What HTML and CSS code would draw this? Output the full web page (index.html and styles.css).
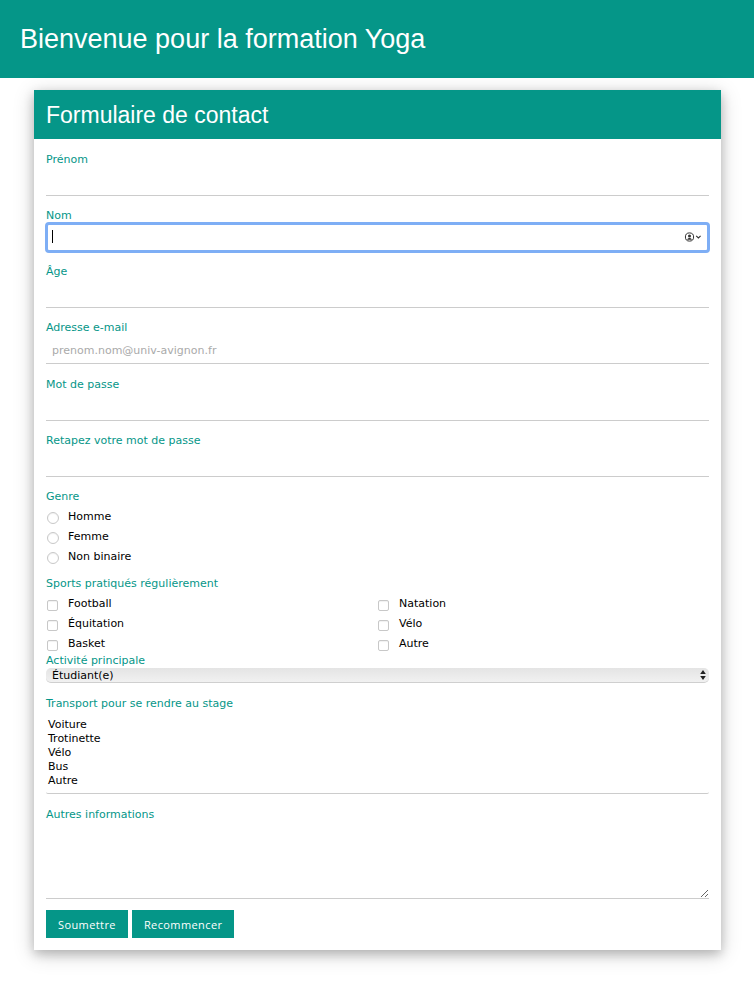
FILE: index.html
```html
<!DOCTYPE html>
<html lang="fr">
<head>
    <meta charset="UTF-8">
    <meta name="viewport" content="width=device-width, initial-scale=1.0">
    <title>Formation Yoga</title>
    <link rel="stylesheet" href="styles.css">
</head>
<body>
    <header class="page-header">
        <h1>Bienvenue pour la formation Yoga</h1>
    </header>

    <div class="form-card">
        <div class="form-title">
            <h2>Formulaire de contact</h2>
        </div>
        <form class="contact-form" id="contactForm">
            <label class="field-label" for="prenom">Prénom</label>
            <input class="text-input" type="text" id="prenom" name="prenom">

            <label class="field-label" for="nom">Nom</label>
            <div class="autofill-wrap">
                <input class="text-input text-input-focus" type="text" id="nom" name="nom" autocomplete="off">
                <span class="fake-caret"></span>
                <svg class="autofill-icon" width="18" height="11" viewBox="0 0 18 11">
                    <circle cx="5.5" cy="5" r="4.1" fill="none" stroke="#333" stroke-width="1"/>
                    <circle cx="5.5" cy="3.9" r="1.5" fill="#333"/>
                    <path d="M3 7.8c.5-1.3 1.5-1.8 2.5-1.8s2 .5 2.5 1.8z" fill="#333"/>
                    <path d="M12.2 3.8l2.2 2.2 2.2-2.2" fill="none" stroke="#333" stroke-width="1.1"/>
                </svg>
            </div>

            <label class="field-label" for="age">Âge</label>
            <input class="text-input" type="text" id="age" name="age">

            <label class="field-label" for="email">Adresse e-mail</label>
            <input class="text-input text-input-email" type="email" id="email" name="email" placeholder="prenom.nom@univ-avignon.fr">

            <label class="field-label" for="pass1">Mot de passe</label>
            <input class="text-input" type="password" id="pass1" name="pass1">

            <label class="field-label" for="pass2">Retapez votre mot de passe</label>
            <input class="text-input" type="password" id="pass2" name="pass2">

            <div class="field-label">Genre</div>
            <div class="choice-list">
                <label class="choice"><input class="radio" type="radio" name="genre"><span>Homme</span></label>
                <label class="choice"><input class="radio" type="radio" name="genre"><span>Femme</span></label>
                <label class="choice"><input class="radio" type="radio" name="genre"><span>Non binaire</span></label>
            </div>

            <div class="field-label sports-label">Sports pratiqués régulièrement</div>
            <div class="choice-grid">
                <label class="choice"><input class="check" type="checkbox"><span>Football</span></label>
                <label class="choice"><input class="check" type="checkbox"><span>Natation</span></label>
                <label class="choice"><input class="check" type="checkbox"><span>Équitation</span></label>
                <label class="choice"><input class="check" type="checkbox"><span>Vélo</span></label>
                <label class="choice"><input class="check" type="checkbox"><span>Basket</span></label>
                <label class="choice"><input class="check" type="checkbox"><span>Autre</span></label>
            </div>

            <label class="field-label activity-label" for="activite">Activité principale</label>
            <div class="select-wrap">
                <select class="select-input" id="activite" name="activite">
                    <option>Étudiant(e)</option>
                </select>
                <svg class="select-arrows" width="6" height="10" viewBox="0 0 6 10">
                    <path d="M3 0l2.8 3.9H.2zM3 10L.2 6.1h5.6z" fill="#222"/>
                </svg>
            </div>

            <label class="field-label transport-label" for="transport">Transport pour se rendre au stage</label>
            <select class="list-input" id="transport" name="transport" size="5" multiple>
                <option>Voiture</option>
                <option>Trotinette</option>
                <option>Vélo</option>
                <option>Bus</option>
                <option>Autre</option>
            </select>

            <label class="field-label other-label" for="autres">Autres informations</label>
            <textarea class="area-input" id="autres" name="autres"></textarea>

            <div class="form-buttons">
                <button class="btn" type="submit">Soumettre</button>
                <button class="btn" type="reset">Recommencer</button>
            </div>
        </form>
    </div>
</body>
</html>
```

FILE: styles.css
```css
html, body {
    margin: 0;
    background-color: #ffffff;
}
body {
    font-family: "DejaVu Sans", Verdana, sans-serif;
    font-size: 11px;
    color: #000000;
    height: 990px;
    overflow: hidden;
}
* {
    box-sizing: border-box;
}
h1, h2 {
    font-family: "Liberation Sans", Arial, sans-serif;
    font-weight: 400;
    margin: 0;
    color: #ffffff;
}
.page-header {
    background-color: #059688;
    height: 78px;
    padding: 0 20px;
    display: flex;
    align-items: center;
}
.page-header h1 {
    font-size: 27px;
}
.form-card {
    margin: 12px 33px 0 34px;
    height: 860px;
    box-shadow: 0 4px 10px 0 rgba(0, 0, 0, 0.2), 0 4px 20px 0 rgba(0, 0, 0, 0.19);
}
.form-title {
    background-color: #059688;
    height: 49px;
    padding: 2px 12px 0;
    display: flex;
    align-items: center;
}
.form-title h2 {
    font-size: 23px;
}
.contact-form {
    padding: 12px;
    display: flex;
    flex-direction: column;
}
.field-label {
    display: block;
    color: #059688;
    height: 16px;
    line-height: 18px;
}
.text-input {
    display: block;
    width: 100%;
    height: 29px;
    margin-bottom: 11px;
    padding: 9px 6px 7px;
    border: none;
    border-bottom: 1px solid #cccccc;
    background: #ffffff;
    font: inherit;
    outline: none;
}
.text-input::placeholder {
    color: #aaaaaa;
}
.text-input-email {
    margin-bottom: 12px;
}
.text-input-focus {
    border: none;
    border-radius: 3px;
    outline: 3px solid #7eaef5;
    outline-offset: -2px;
}
.autofill-wrap,
.select-wrap {
    position: relative;
}
.fake-caret {
    position: absolute;
    left: 6px;
    top: 7px;
    width: 1px;
    height: 13px;
    background-color: #000000;
}
.autofill-icon {
    position: absolute;
    right: 7px;
    top: 9px;
}
.choice-list {
    display: flex;
    flex-direction: column;
    margin-top: 4px;
}
.choice {
    display: flex;
    align-items: center;
    height: 20px;
}
.choice span {
    margin-top: -3px;
}
.radio,
.check {
    appearance: none;
    margin: 0 9px 0 1px;
    width: 12px;
    height: 12px;
    border: 1px solid #c8c8c8;
    background: #ffffff;
    flex: none;
    box-shadow: inset 0 1px 1px rgba(0, 0, 0, 0.06);
}
.radio {
    border-radius: 50%;
    border-width: 1.5px;
}
.check {
    margin: 0 10px 0 1px;
    width: 11px;
    height: 11px;
    border-radius: 2px;
}
.sports-label {
    margin-top: 7px;
    margin-bottom: 4px;
}
.choice-grid {
    display: grid;
    grid-template-columns: 331px 1fr;
}
.activity-label {
    margin-top: -2px;
    height: 15px;
    line-height: 15px;
}
.select-input {
    display: block;
    width: 100%;
    height: 15px;
    padding: 1px 6px 0;
    appearance: none;
    border: none;
    border-radius: 5px;
    border-bottom: 1px solid #cfcfcf;
    background: linear-gradient(#e4e4e4, #f1f1f1);
    color: #000000;
    font: inherit;
    line-height: 14px;
}
.select-arrows {
    position: absolute;
    right: 3px;
    top: 2px;
}
.transport-label {
    margin-top: 12px;
}
.list-input {
    display: block;
    width: 100%;
    height: 76px;
    margin-top: 7px;
    padding: 0 2px;
    border: none;
    border-bottom: 1px solid #cccccc;
    background: #ffffff;
    font: inherit;
    overflow: hidden;
    outline: none;
}
.list-input option {
    height: 14px;
    min-height: 14px;
    line-height: 14px;
    padding: 0;
}
.other-label {
    margin-top: 12px;
}
.area-input {
    display: block;
    width: 100%;
    height: 77px;
    margin-top: 0;
    padding: 8px;
    border: none;
    border-bottom: 1px solid #cccccc;
    font: inherit;
    outline: none;
}
.form-buttons {
    display: flex;
    gap: 4px;
    margin-top: 11px;
}
.btn {
    height: 28px;
    padding: 0 12px;
    border: none;
    background-color: #059688;
    color: #ffffff;
    font-family: "Open Sans", sans-serif;
    font-size: 11px;
    letter-spacing: 0.4px;
    cursor: pointer;
}
```
